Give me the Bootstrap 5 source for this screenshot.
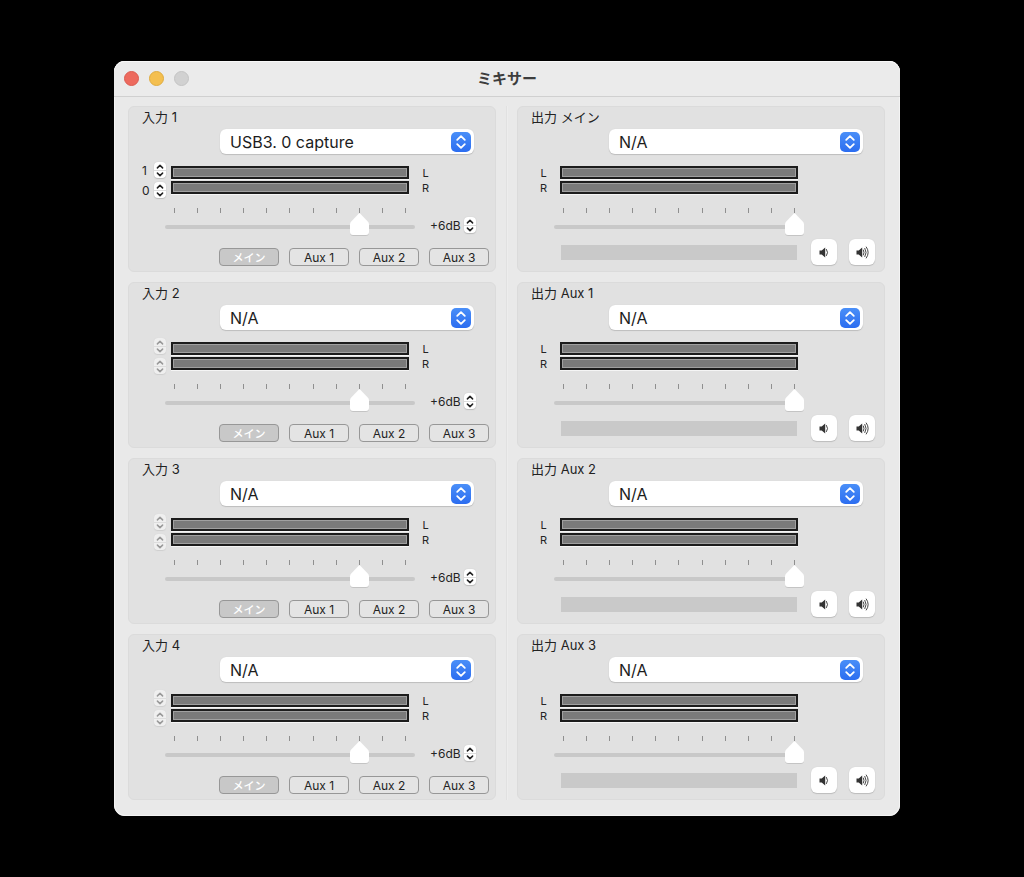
<!DOCTYPE html>
<html lang="ja">
<head>
<meta charset="utf-8">
<meta name="viewport" content="width=device-width, initial-scale=1">
<title>ミキサー</title>
<link href="https://cdn.jsdelivr.net/npm/bootstrap@5.3.0/dist/css/bootstrap.min.css" rel="stylesheet">
<style>
  body { background: #000; color: #242424; font-family: Inter, "Noto Sans CJK JP", sans-serif; font-size: 12px; line-height: 18px; }
  .desk { padding-right: 10px; }
  .mixer { max-width: 786px; background: #e9e9e9; border-radius: 11px; box-shadow: inset 0 0 0 1px #f4f4f4; }
  .titlebar { display: grid; grid-template-columns: 1fr auto 1fr; height: 36px; padding: 0 10px; background: #ebebeb; border-bottom: 1px solid #d0d0d0; border-radius: 11px 11px 0 0; box-shadow: inset 0 1px 0 #f8f8f8; }
  .titlebar h1 { font-size: 15px; line-height: 35px; font-weight: 700; color: #3d3d3d; }
  .dot { width: 15px; height: 15px; border-radius: 50%; padding: 0; border: 1px solid #c4c4c4; background: #d1d1d1; }
  .dot-close { background: #ed6a5e; border-color: #dc5b50; }
  .dot-min { background: #f4bf4f; border-color: #dfac40; }
  .banks { gap: 10px; padding: 9px 15px 16px 14px; }
  .bank { display: grid; gap: 10px; flex: 1 1 0; min-width: 0; }
  .divider { width: 1px; background: #e1e1e1; box-shadow: 1px 0 0 #ededed; }
  .strip { background: #e1e1e1; border: 1px solid #dbdbdb; border-radius: 6px; height: 166px; }
  .strip h2 { font-size: 13px; line-height: 21px; height: 22px; font-weight: 400; padding-left: 13px; color: #222; }
  .device { margin: 0 21px 8px 91px; }
  .device .form-select { height: 25px; padding: 0 30px 0 10px; font-size: 16px; line-height: 24px; color: #1c1c1c; border: 0; border-radius: 6px; box-shadow: 0 1px 1px #bdbdbd, 0 0 1px #c8c8c8;
    background: #fff url("data:image/svg+xml,%3Csvg xmlns='http://www.w3.org/2000/svg' viewBox='0 0 20 20'%3E%3Cdefs%3E%3ClinearGradient id='g' x2='0' y2='1'%3E%3Cstop stop-color='%234a8ff8'/%3E%3Cstop offset='1' stop-color='%232c6df0'/%3E%3C/linearGradient%3E%3C/defs%3E%3Crect width='20' height='20' rx='5' fill='url(%23g)'/%3E%3Cpath d='M6.2 7.9 10 4.1l3.8 3.8M6.2 12.1l3.8 3.8 3.8-3.8' fill='none' stroke='%23fff' stroke-width='1.8' stroke-linecap='round' stroke-linejoin='round'/%3E%3C/svg%3E") no-repeat right 3px center / 20px 20px; }
  .levels { height: 36px; margin-bottom: 10px; }
  .channels { width: 42px; padding-left: 13px; display: grid; gap: 4px; }
  .channels > div { display: flex; justify-content: space-between; height: 16px; padding-right: 5px; }
  .stepper { width: 12px; height: 16px; display: flex; flex-direction: column; background: #fff; border-radius: 4px; box-shadow: 0 1px 1px #bbb, 0 0 1px #bbb; }
  .stepper button { display: flex; align-items: center; justify-content: center; height: 8px; width: 12px; padding: 0; border: 0; background: none; color: #222; }
  .stepper button + button { border-top: 1px solid #ddd; }
  .stepper svg, .vol svg { display: block; }
  .stepper:has(:disabled) { background: #efefef; box-shadow: 0 1px 1px #cfcfcf, 0 0 1px #cfcfcf; }
  .stepper button:disabled { color: #999; }
  .meters { display: grid; gap: 2px; flex: 1 1 0; }
  .level { height: 13px; background: #7a7a7a; border: 2px solid #1c1c1c; box-shadow: inset 0 0 0 1px #a0a0a0, 0 1px 0 #f5f5f5; }
  .sides { display: grid; justify-content: start; justify-items: center; padding-top: 2px; font-size: 11px; line-height: 15px; }
  .sides-end { width: 86px; padding-left: 13px; }
  .sides-start { width: 42px; padding-left: 22px; }
  .output .meters { margin-right: 86px; }
  .gain { height: 31px; margin-left: 36px; }
  .fader { flex: 1 1 0; min-width: 0; }
  .ticks { display: flex; justify-content: space-between; height: 5px; padding: 0 9px; }
  .ticks i { width: 1px; background: #8f8f8f; }
  .fader input { display: block; -webkit-appearance: none; appearance: none; width: 100%; height: 28px; margin: 0 0 -2px; background: none; }
  .fader input::-webkit-slider-runnable-track { height: 4px; border-radius: 2px; background: #c8c8c8; }
  .fader input::-webkit-slider-thumb { -webkit-appearance: none; width: 19px; height: 24px; margin-top: -12px; border: 0;
    background: url("data:image/svg+xml,%3Csvg xmlns='http://www.w3.org/2000/svg' viewBox='0 0 19 24'%3E%3Cpath d='M8.4 1.5Q9.5 0 10.6 1.5L17.8 9.3Q19 10.5 19 12V19.5Q19 23 15.5 23H3.5Q0 23 0 19.5V12Q0 10.5 1.2 9.3Z' fill='%23c4c4c4'/%3E%3Cpath d='M8.4 1Q9.5-.5 10.6 1L17.8 8.5Q19 9.7 19 11V19Q19 22 16 22H3Q0 22 0 19V11Q0 9.7 1.2 8.5Z' fill='%23fff'/%3E%3C/svg%3E") no-repeat; }
  .gain-value { width: 80px; padding: 9px 0 0 15px; gap: 3px; }
  .gain-value output { width: 31px; white-space: nowrap; }
  .output .gain { margin-right: 80px; }
  .routes { height: 27px; gap: 10px; padding-right: 6px; }
  .route { width: 60px; height: 18px; padding: 0; font-size: 12px; line-height: 18px; border: 1px solid #979797; border-radius: 4px; background: #e4e4e4; color: #222; }
  .route[aria-pressed=true] { background: #c8c8c8; color: #fff; font-size: 11px; font-weight: 500; }
  .monitor { padding: 0 9px 0 43px; height: 26px; gap: 12px; }
  .monitor .bar { flex: 1 1 0; height: 15px; margin-right: 2px; background: #c9c9c9; }
  .vol { display: flex; align-items: center; justify-content: center; width: 26px; height: 26px; padding: 0; border: 0; border-radius: 6px; background: #fff; color: #333; box-shadow: 0 1px 1px #bcbcbc, 0 0 1px #c4c4c4; }
  @media (max-width: 700px) { .banks { flex-direction: column; } .bank { flex: none; } }
</style>
</head>
<body>
<div class="desk min-vh-100 d-flex align-items-center justify-content-center">
  <main class="mixer w-100">
    <header class="titlebar">
      <div class="d-flex align-items-center" style="gap:10px">
        <button class="dot dot-close" aria-label="閉じる"></button>
        <button class="dot dot-min" aria-label="しまう"></button>
        <button class="dot" aria-label="拡大" disabled></button>
      </div>
      <h1 class="m-0">ミキサー</h1>
    </header>
    <div class="banks d-flex">
      <div class="bank" id="inputs"></div>
      <div class="divider"></div>
      <div class="bank" id="outputs"></div>
    </div>
  </main>
</div>
<script src="https://cdn.jsdelivr.net/npm/bootstrap@5.3.0/dist/js/bootstrap.bundle.min.js"></script>
<script>
  const chevron = d => `<svg width="8" height="5" viewBox="0 0 8 5"><path d="${d}" fill="none" stroke="currentColor" stroke-width="1.5" stroke-linecap="round" stroke-linejoin="round"/></svg>`;
  const stepper = (name, off) => `<span class="stepper"><button aria-label="${name} +" ${off}>${chevron('M1.4 3.9 4 1.4l2.6 2.5')}</button><button aria-label="${name} -" ${off}>${chevron('M1.4 1.1 4 3.6l2.6-2.5')}</button></span>`;
  const device = (id, title, name) => `<h2 class="m-0"><label for="${id}">${title}</label></h2>
    <div class="device"><select class="form-select" id="${id}"><option>${name}</option></select></div>`;
  const meters = '<div class="meters"><div class="level"></div><div class="level"></div></div>';
  const sides = at => `<div class="sides sides-${at}"><div>L</div><div>R</div></div>`;
  const fader = (title, v) => `<div class="fader"><div class="ticks">${'<i></i>'.repeat(11)}</div><input type="range" min="0" max="10" value="${v}" aria-label="${title}"></div>`;
  const speaker = '<path d="M.5 4.5h2.2L6.2 1.5v10L2.7 8.5H.5Z" fill="currentColor"/>';
  const wave = d => `<path d="${d}" fill="none" stroke="currentColor" stroke-width=".9" stroke-linecap="round"/>`;

  document.getElementById('inputs').innerHTML = [1, 2, 3, 4].map(n => {
    const t = `入力 ${n}`, off = n > 1 ? 'disabled' : '';
    return `<section class="strip">${device('in' + n, t, n > 1 ? 'N/A' : 'USB3. 0 capture')}
      <div class="levels d-flex align-items-center">
        <div class="channels">${['1', '0'].map(c => `<div><span>${n > 1 ? '' : c}</span>${stepper(t, off)}</div>`).join('')}</div>
        ${meters}${sides('end')}
      </div>
      <div class="gain d-flex">${fader(t, 8)}<div class="gain-value d-flex"><output>+6dB</output>${stepper(t + ' gain', '')}</div></div>
      <div class="routes d-flex justify-content-end align-items-end">${['メイン', 'Aux 1', 'Aux 2', 'Aux 3'].map((r, i) => `<button class="route" aria-pressed="${i === 0}">${r}</button>`).join('')}</div>
    </section>`;
  }).join('');

  document.getElementById('outputs').innerHTML = ['メイン', 'Aux 1', 'Aux 2', 'Aux 3'].map((o, n) => {
    const t = `出力 ${o}`;
    return `<section class="strip output">${device('out' + n, t, 'N/A')}
      <div class="levels d-flex align-items-center">${sides('start')}${meters}</div>
      <div class="gain d-flex">${fader(t, 10)}</div>
      <div class="monitor d-flex align-items-center"><div class="bar"></div>
        <button class="vol" aria-label="${t} 音量を下げる"><svg width="10" height="13" viewBox="0 0 10 13">${speaker}${wave('M7.5 3.4Q9.8 6.5 7.5 9.6')}</svg></button>
        <button class="vol" aria-label="${t} 音量を上げる"><svg width="13" height="13" viewBox="0 0 13 13">${speaker}${wave('M7.4 4Q8.8 6.5 7.4 9M8.9 2.4Q11.4 6.5 8.9 10.6M10.3 1Q14.2 6.5 10.3 12')}</svg></button>
      </div>
    </section>`;
  }).join('');
</script>
</body>
</html>
